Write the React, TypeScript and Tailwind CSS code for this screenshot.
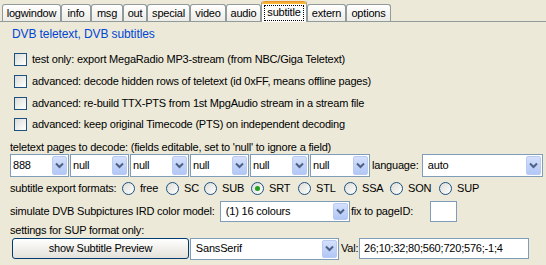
import React from "react";

const font = { fontFamily: '"Liberation Sans", Arial, sans-serif' };

function Chevron() {
  return (
    <svg width="9" height="7" viewBox="0 0 9 7">
      <polyline points="1,1.5 4.5,5 8,1.5" fill="none" stroke="#4d6185" strokeWidth="2" />
    </svg>
  );
}

function Combo({ w, h, text }: { w: string; h: string; text: string }) {
  return (
    <div className={`${w} ${h} flex shrink-0 border border-[#7f9db9] bg-white p-[1px]`}>
      <div className="flex flex-1 items-center overflow-hidden pl-[1px] text-black whitespace-pre">{text}</div>
      <div className="flex w-[15px] items-center justify-center rounded-[2px] border border-[#b9cbf3] bg-gradient-to-b from-[#d4e0fc] to-[#b2c7f6]">
        <Chevron />
      </div>
    </div>
  );
}

function Checkbox() {
  return <div className="h-[13px] w-[13px] shrink-0 border border-[#1c5180] bg-gradient-to-br from-[#dcdcd7] to-[#ffffff]" />;
}

function Radio({ checked, label, w }: { checked?: boolean; label: string; w: string }) {
  return (
    <div className={`${w} flex shrink-0 items-center`}>
      <div className="flex h-[13px] w-[13px] items-center justify-center rounded-full border border-[#1c5180] bg-gradient-to-br from-[#dcdcd7] to-[#ffffff]">
        {checked && <div className="h-[5px] w-[5px] rounded-full bg-[#21a121]" />}
      </div>
      <span className="ml-[5px]">{label}</span>
    </div>
  );
}

const tabs: [string, string][] = [
  ["logwindow", "w-[59px]"],
  ["info", "w-[30px]"],
  ["msg", "w-[32px]"],
  ["out", "w-[24px]"],
  ["special", "w-[43px]"],
  ["video", "w-[36px]"],
  ["audio", "w-[35px]"],
  ["subtitle", "w-[46px]"],
  ["extern", "w-[39px]"],
  ["options", "w-[45px]"],
];

export default function App() {
  return (
    <div style={font} className="h-[265px] w-[546px] overflow-hidden whitespace-nowrap bg-[#ECE9D8] text-[11px] leading-[13px] tracking-[-0.2px] text-black">
      {/* tab bar */}
      <div className="flex h-[22px] items-end border-b border-[#919b9c] pl-[2px]">
        {tabs.map(([name, w]) =>
          name === "subtitle" ? (
            <div key={name} className={`${w} relative -mb-[1px] flex h-[21px] flex-col rounded-t-[3px] border-x border-[#919b9c] bg-[#fcfcfa]`}>
              <div className="h-[3px] rounded-t-[3px] bg-gradient-to-b from-[#e68b2c] to-[#ffc73c]" />
              <div className="flex flex-1 items-start justify-center pt-[1px]">
                <span className="border border-dotted border-black px-[2px] pb-[1px]">{name}</span>
              </div>
            </div>
          ) : (
            <div key={name} className={`${w} flex h-[17px] items-center justify-center rounded-t-[3px] border border-b-0 border-[#919b9c] bg-gradient-to-b from-[#ffffff] to-[#ecebe5]`}>
              {name}
            </div>
          )
        )}
      </div>

      {/* title */}
      <div className="flex h-[24px] items-center pl-[12px] text-[12px] tracking-[-0.1px] text-[#0046d5]">DVB teletext, DVB subtitles</div>

      <div className="mt-[3px] flex flex-col pl-[14px]">
        <div className="flex h-[21px] items-center gap-[5px]"><Checkbox /><span>test only: export MegaRadio MP3-stream (from NBC/Giga Teletext)</span></div>
        <div className="flex h-[22px] items-center gap-[5px]"><Checkbox /><span>advanced: decode hidden rows of teletext (id 0xFF, means offline pages)</span></div>
        <div className="flex h-[22px] items-center gap-[5px]"><Checkbox /><span>advanced: re-build TTX-PTS from 1st MpgAudio stream in a stream file</span></div>
        <div className="flex h-[21px] items-center gap-[5px]"><Checkbox /><span>advanced: keep original Timecode (PTS) on independent decoding</span></div>
      </div>

      <div className="mt-[5px] flex h-[14px] items-center pl-[10px]">teletext pages to decode: (fields editable, set to 'null' to ignore a field)</div>

      <div className="flex h-[23px] items-stretch gap-[1px] pl-[10px]">
        <Combo w="w-[59px]" h="h-[23px]" text="888" />
        <Combo w="w-[59px]" h="h-[23px]" text="null" />
        <Combo w="w-[59px]" h="h-[23px]" text="null" />
        <Combo w="w-[59px]" h="h-[23px]" text="null" />
        <Combo w="w-[59px]" h="h-[23px]" text="null" />
        <Combo w="w-[60px]" h="h-[23px]" text="null" />
        <div className="ml-[1px] flex w-[49px] shrink-0 items-center">language:</div>
        <Combo w="w-[121px]" h="h-[23px]" text=" auto" />
      </div>

      <div className="flex h-[22px] items-center pl-[10px]">
        <div className="w-[112px] shrink-0">subtitle export formats:</div>
        <Radio w="w-[44px]" label="free" />
        <Radio w="w-[38px]" label="SC" />
        <Radio w="w-[47px]" label="SUB" />
        <Radio w="w-[47px]" label="SRT" checked />
        <Radio w="w-[46px]" label="STL" />
        <Radio w="w-[46px]" label="SSA" />
        <Radio w="w-[49px]" label="SON" />
        <Radio w="w-[49px]" label="SUP" />
      </div>

      <div className="mt-[1px] flex h-[22px] items-center pl-[10px]">
        <div className="w-[210px] shrink-0">simulate DVB Subpictures IRD color model:</div>
        <Combo w="w-[130px]" h="h-[21px]" text=" (1) 16 colours" />
        <div className="ml-[1px] w-[79px] shrink-0">fix to pageID:</div>
        <div className="h-[21px] w-[27px] shrink-0 border border-[#7f9db9] bg-white" />
      </div>

      <div className="flex h-[15px] items-end pl-[10px]">settings for SUP format only:</div>

      <div className="flex h-[22px] items-center pl-[12px] pt-[1px]">
        <div className="flex h-[21px] w-[177px] shrink-0 items-center justify-center rounded-[3px] border border-[#003c74] bg-gradient-to-b from-[#ffffff] to-[#e3e1d9]">show Subtitle Preview</div>
        <div className="ml-[1px]"><Combo w="w-[149px]" h="h-[22px]" text=" SansSerif" /></div>
        <div className="ml-[2px] w-[18px] shrink-0">Val:</div>
        <div className="flex h-[21px] w-[170px] shrink-0 items-center border border-[#7f9db9] bg-white pl-[4px]">26;10;32;80;560;720;576;-1;4</div>
      </div>
    </div>
  );
}
